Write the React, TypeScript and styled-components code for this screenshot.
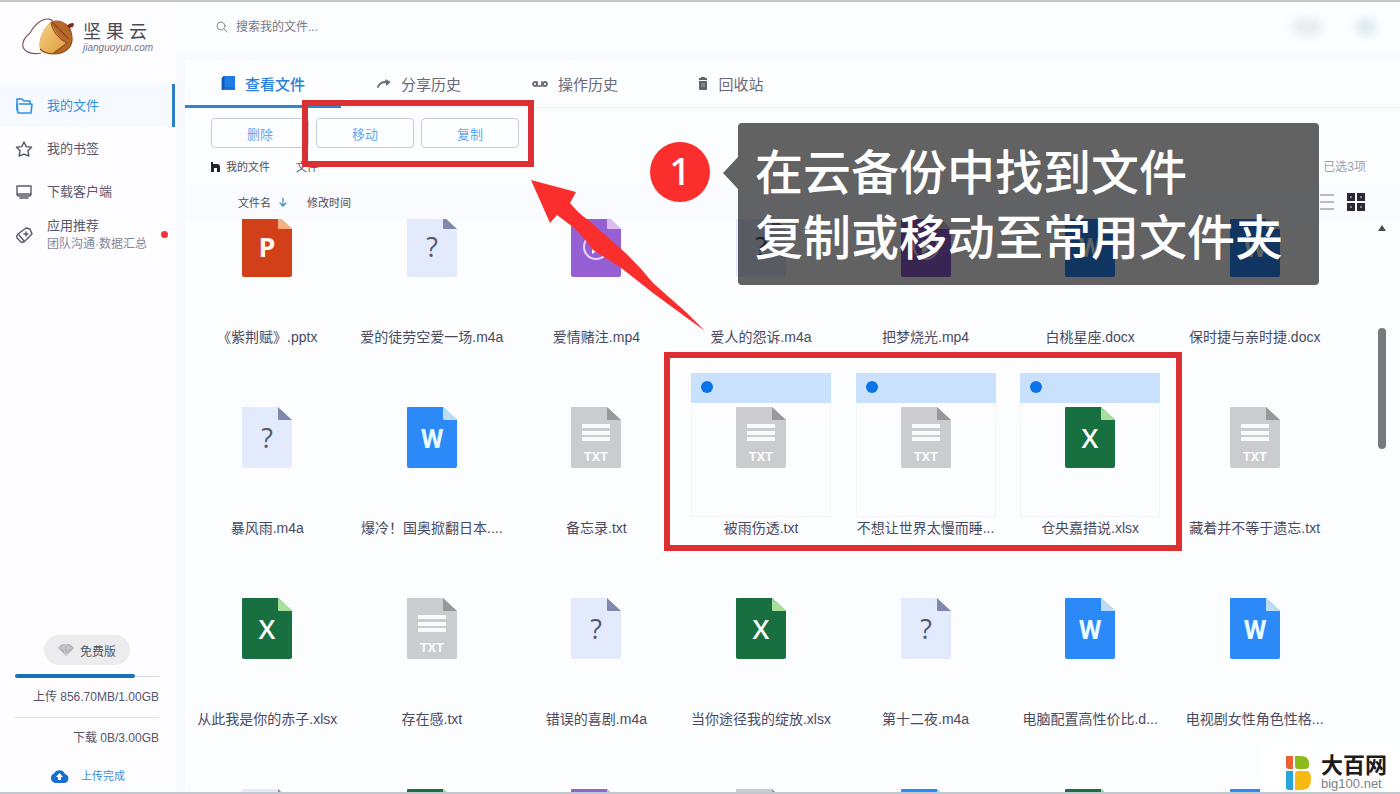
import React from "react";
import styled, { createGlobalStyle, css } from "styled-components";

const GlobalStyle = createGlobalStyle`
  *, *::before, *::after { box-sizing: border-box; }
  body {
    margin: 0;
    background: #fcfdff;
    color: #4c4c60;
    font-family: "Liberation Sans", "Noto Sans CJK SC", sans-serif;
    font-size: 13px;
  }
  a { color: inherit; text-decoration: none; }
  button { font: inherit; color: inherit; cursor: pointer; }
  svg { display: block; flex: none; }
`;

const Shell = styled.div`
  position: relative;
  display: flex;
  height: 100vh;
  overflow: hidden;
  border-top: 2px solid #c6c7ca;
  border-bottom: 2px solid #c3c7ce;
`;

/* ---------- Sidebar ---------- */

const Sidebar = styled.aside`
  flex: none;
  display: flex;
  flex-direction: column;
  width: 176px;
  background: #fdfdff;
`;

const Brand = styled.a`
  display: flex;
  align-items: center;
  gap: 8px;
  height: 82px;
  padding: 0 0 12px 22px;
`;

const BrandText = styled.span`
  display: flex;
  flex-direction: column;
`;

const BrandName = styled.span`
  font-size: 18px;
  line-height: 20px;
  color: #4b4b52;
  white-space: nowrap;
`;

const BrandUrl = styled.span`
  font-size: 10px;
  line-height: 11px;
  font-style: italic;
  color: #77777f;
`;

const Nav = styled.nav`
  display: flex;
  flex-direction: column;
`;

const NavItem = styled.a<{ $active?: boolean }>`
  display: flex;
  align-items: center;
  gap: 14px;
  height: 43px;
  margin-right: 1px;
  padding: 0 4px 0 15px;
  border-right: 3px solid ${(p) => (p.$active ? "#2f80c3" : "transparent")};
  background: ${(p) => (p.$active ? "#f6faff" : "transparent")};
  color: ${(p) => (p.$active ? "#2f8fe6" : "#57576b")};
`;

const NavLabel = styled.span`
  display: flex;
  flex: 1;
  flex-direction: column;
  line-height: 18px;
  white-space: nowrap;
`;

const NavHint = styled.small`
  font-size: 12px;
  line-height: 18px;
  color: #85859a;
`;

const Dot = styled.i`
  flex: none;
  width: 7px;
  height: 7px;
  border-radius: 50%;
  background: #e8383d;
`;

const Quota = styled.section`
  display: flex;
  flex-direction: column;
  margin-top: auto;
  padding: 0 17px 6px 15px;
`;

const PlanButton = styled.button`
  align-self: center;
  display: flex;
  align-items: center;
  justify-content: center;
  gap: 6px;
  width: 86px;
  height: 30px;
  padding: 0;
  border: 0;
  border-radius: 15px;
  background: #ececee;
  color: #55555f;
  font-size: 12px;
`;

const Meter = styled.div`
  height: 4px;
  margin: 9px 0;
  border-radius: 2px;
  background: linear-gradient(#d9dade, #d9dade) center / 100% 1px no-repeat;
`;

const MeterFill = styled.div`
  height: 4px;
  border-radius: 2px;
  background: #1a70b8;
`;

const QuotaLine = styled.p`
  margin: 0;
  font-size: 12px;
  line-height: 20px;
  text-align: right;
  white-space: nowrap;
  color: #55556a;
`;

const QuotaRule = styled.hr`
  width: 100%;
  margin: 10px 0;
  border: 0;
  border-top: 1px solid #e4e5ea;
`;

const UploadLink = styled.a`
  display: flex;
  align-items: center;
  gap: 12px;
  margin-top: 18px;
  padding-left: 35px;
  font-size: 11px;
  line-height: 20px;
  color: #3f8fd8;
`;

/* ---------- Main area ---------- */

const Main = styled.main`
  flex: 1;
  display: flex;
  flex-direction: column;
  min-width: 0;
  background: #f8f9fc;
`;

const TopBar = styled.header`
  flex: none;
  display: flex;
  align-items: center;
  justify-content: space-between;
  height: 50px;
  padding: 0 24px 0 40px;
  background: #fcfdff;
`;

const Search = styled.label`
  display: flex;
  align-items: center;
  gap: 8px;
  color: #8a8a94;
`;

const SearchInput = styled.input`
  width: 200px;
  padding: 0;
  border: 0;
  outline: 0;
  background: transparent;
  font: inherit;
  font-size: 12px;
  &::placeholder { color: #777782; opacity: 1; }
`;

const Account = styled.div`
  display: flex;
  gap: 34px;
`;

const Smudge = styled.span<{ $w: number; $tone: string }>`
  width: ${(p) => p.$w}px;
  height: 16px;
  border-radius: 8px;
  background: ${(p) => p.$tone};
  filter: blur(4px);
`;

const Panel = styled.section`
  flex: 1;
  display: flex;
  flex-direction: column;
  min-height: 0;
  margin: 8px 0 0 9px;
  background: #fcfdff;
`;

const Tabs = styled.div`
  flex: none;
  display: flex;
  height: 48px;
  border-bottom: 1px solid #edf0f4;
`;

const Tab = styled.button<{ $active?: boolean }>`
  display: flex;
  align-items: center;
  justify-content: center;
  gap: 10px;
  width: 156px;
  height: 48px;
  padding: 2px 0 0;
  border: 0;
  border-bottom: 3px solid ${(p) => (p.$active ? "#2f86cc" : "transparent")};
  background: none;
  font-size: 15px;
  font-weight: ${(p) => (p.$active ? 500 : 400)};
  color: ${(p) => (p.$active ? "#2a80dc" : "#6a6a78")};
`;

const Actions = styled.div`
  flex: none;
  display: flex;
  gap: 7px;
  padding: 10px 26px 9px;
`;

const ActionButton = styled.button`
  width: 98px;
  height: 30px;
  padding: 0;
  border: 1px solid #c3cbdd;
  border-radius: 4px;
  background: #fdfeff;
  color: #62a8ec;
`;

const PathRow = styled.div`
  flex: none;
  display: flex;
  justify-content: space-between;
  padding: 0 34px 0 26px;
  height: 20px;
  font-size: 11px;
  line-height: 20px;
`;

const Crumbs = styled.nav`
  display: flex;
  align-items: center;
  gap: 6px;
`;

const Crumb = styled.a`
  margin-right: 20px;
`;

const Picked = styled.span`
  font-size: 12px;
  color: #a0a0ac;
`;

const SortRow = styled.div`
  flex: none;
  display: flex;
  align-items: center;
  gap: 20px;
  height: 34px;
  margin-top: 8px;
  padding: 0 34px 0 53px;
  background: #fafbfe;
  font-size: 11px;
`;

const SortButton = styled.button`
  display: flex;
  align-items: center;
  gap: 8px;
  padding: 0;
  border: 0;
  background: none;
`;

const ViewSwitch = styled.div`
  display: flex;
  gap: 12px;
  margin-left: auto;
`;

const Browser = styled.div`
  flex: 1;
  display: flex;
  min-height: 0;
  overflow: hidden;
`;

/* The list is scrolled down by the first row's selection strip. */
const FileGrid = styled.ul`
  flex: 1;
  display: grid;
  grid-template-columns: repeat(7, 1fr);
  grid-auto-rows: 191px;
  min-width: 0;
  margin: -37px 0 0;
  padding: 0 27px 0 0;
  list-style: none;
`;

const FileCell = styled.li`
  display: flex;
  flex-direction: column;
  align-items: center;
  min-width: 0;
`;

const FileCard = styled.label<{ $picked?: boolean }>`
  display: flex;
  flex-direction: column;
  align-items: center;
  gap: 4px;
  width: 140px;
  height: 144px;
  ${(p) =>
    p.$picked &&
    css`
      box-shadow: inset 0 0 0 1px #f3f5fa;
    `}
`;

const PickStrip = styled.span<{ $picked?: boolean }>`
  display: flex;
  align-items: center;
  width: 100%;
  height: 30px;
  padding: 0 10px 2px;
  background: ${(p) => (p.$picked ? "#c9e1fd" : "transparent")};
`;

const PickBox = styled.input`
  appearance: none;
  width: 12px;
  height: 12px;
  margin: 0;
  border-radius: 50%;
  &:checked { background: #0b74e8; }
`;

const FileName = styled.span`
  font-size: 14px;
  line-height: 22px;
  white-space: nowrap;
  color: #4a4a5e;
`;

const Scroller = styled.div`
  flex: none;
  display: flex;
  flex-direction: column;
  align-items: center;
  gap: 96px;
  width: 36px;
  padding-top: 6px;
`;

const Thumb = styled.div`
  width: 8px;
  height: 121px;
  border-radius: 4px;
  background: #77797d;
`;

/* ---------- Tutorial marks laid over the page ---------- */

const Frame = styled.div<{ $x: number; $y: number; $w: number; $h: number }>`
  position: absolute;
  left: ${(p) => p.$x}px;
  top: ${(p) => p.$y}px;
  width: ${(p) => p.$w}px;
  height: ${(p) => p.$h}px;
  border: 6px solid #dc2f34;
  pointer-events: none;
`;

const Arrow = styled.svg`
  position: absolute;
  left: 526px;
  top: 174px;
  pointer-events: none;
`;

const StepBadge = styled.div`
  position: absolute;
  left: 650px;
  top: 140px;
  display: flex;
  align-items: center;
  justify-content: center;
  width: 60px;
  height: 60px;
  padding-bottom: 4px;
  border-radius: 50%;
  background: #fb2e2e;
  color: #fff;
  font: 500 38px/56px "Noto Sans", sans-serif;
`;

const Callout = styled.div`
  position: absolute;
  left: 738px;
  top: 121px;
  width: 581px;
  height: 162px;
  padding: 18px 17px;
  border-radius: 4px;
  background: rgba(0, 0, 0, 0.61);
  color: #fff;
  font-size: 48px;
  font-weight: 500;
  line-height: 65px;
  white-space: nowrap;
  &::before {
    content: "";
    position: absolute;
    right: 100%;
    top: 34px;
    border: solid transparent;
    border-width: 16px 15px 16px 0;
    border-right-color: rgba(0, 0, 0, 0.61);
  }
`;

const SiteMark = styled.a`
  position: absolute;
  right: 0;
  bottom: -2px;
  display: flex;
  align-items: center;
  gap: 10px;
  width: 140px;
  height: 49px;
  padding: 6px 0 0 26px;
  background: #fff;
`;

const SiteText = styled.span`
  display: flex;
  flex-direction: column;
`;

const SiteName = styled.strong`
  font-size: 22px;
  line-height: 23px;
  font-weight: 700;
  color: #1c1c1c;
`;

const SiteUrl = styled.span`
  font-size: 13px;
  line-height: 14px;
  color: #808080;
`;

/* ---------- Icons ---------- */

const line = {
  fill: "none",
  stroke: "currentColor",
  strokeWidth: 1.4,
  strokeLinecap: "round" as const,
  strokeLinejoin: "round" as const,
};

const AcornLogo = () => (
  <svg width="53" height="38" viewBox="0 0 53 38">
    <defs>
      <linearGradient id="nut" x1="0" y1="0" x2="1" y2="1">
        <stop offset="0" stopColor="#f7d283" />
        <stop offset="1" stopColor="#dd9a3c" />
      </linearGradient>
    </defs>
    <path d="M19 35C10 37 3 34 1 29c-1-5 2-10 7-14C12 7 19 1 26 1c3 0 4 1 5 3" fill="#fff" stroke="#85505a" strokeWidth="1.1" />
    <path d="M29 4C22 10 16 20 18 31c1 4 9 5 14 5 9 0 17-5 18-13 1-9-6-16-21-19z" fill="#b5682a" />
    <path d="M29 4C22 10 16 20 18 31c2 3 8 5 13 4l14-10C38 20 32 13 29 4z" fill="url(#nut)" />
    <path d="M29 4c5-3 13-1 18 4 3 4 3 9 1 15l-3 2C39 20 32 13 29 4z" fill="#b8672a" />
    <path d="M30 4l17 17" stroke="#8c4a1c" strokeWidth="1.2" />
    <path d="M29 4c1 9 8 17 16 21L32 35M18 31c3 3 9 5 14 5 9 0 17-5 18-13 1-5-1-9-3-14" fill="none" stroke="#93501e" strokeWidth="1.1" />
    <path d="M45 8q2-3 6-3l1 1-1 3-4 1z" fill="#7b2a1c" />
  </svg>
);

const FolderIcon = () => (
  <svg width="18" height="18" viewBox="0 0 18 18" {...line} strokeWidth={1.6}>
    <path d="M2 6V2h5l2 2h6v3M2 4v9" />
    <path d="M4 7h13l-1 9H3L2 8" />
  </svg>
);

const StarIcon = () => (
  <svg width="18" height="18" viewBox="0 0 18 18" {...line}>
    <path d="M9 2l2.200 4.600 5.300.6-3.600 3.600 1 5.200L9 14.200 4.100 16l1-5.200L1.500 7.200l5.300-.6z" />
  </svg>
);

const MonitorIcon = () => (
  <svg width="18" height="18" viewBox="0 0 18 18" {...line}>
    <path d="M2 3h14v8q0 2-2 2H4q-2 0-2-2zM3 11h12M5 15h8" />
  </svg>
);

const TagIcon = () => (
  <svg width="18" height="18" viewBox="0 0 18 18" {...line}>
    <path d="M11 2l4 1 2 5-7 7q-2 2-4 1l-4-4q-1-2 1-4z" />
    <path d="M11 6v4M9 8h4M4 9l5 6" />
  </svg>
);

const GemIcon = () => (
  <svg width="16" height="14" viewBox="0 0 16 14">
    <path d="M4 1h8l4 4-8 8-8-8z" fill="#b3b3b6" />
    <path d="M0 5h16M4 1l1.500 4L8 13l2.500-8L12 1M5.500 5L8 1l2.500 4" fill="none" stroke="#d4d4d6" strokeWidth=".8" />
  </svg>
);

const CloudIcon = () => (
  <svg width="19" height="14" viewBox="0 0 19 14">
    <path d="M5 14a5 5 0 01-1-9.500 6 6 0 0111 .5A4.600 4.600 0 0114.500 14z" fill="#176fce" />
    <path d="M9.500 4L6 8h2v3h3V8h2z" fill="#fff" />
  </svg>
);

const SearchIcon = () => (
  <svg width="12" height="12" viewBox="0 0 12 12" {...line} strokeWidth={1}>
    <circle cx="5" cy="5" r="4" />
    <path d="M8 8l3 3" />
  </svg>
);

const BookIcon = () => (
  <svg width="14" height="15" viewBox="0 0 14 15">
    <path d="M3 0h11v14H1V2z" fill="#1f7be6" />
    <path d="M3 0v12L1 14V2zM3 12h11" fill="#0f5bb8" stroke="#0f5bb8" strokeWidth=".8" />
  </svg>
);

const ShareIcon = () => (
  <svg width="14" height="12" viewBox="0 0 14 12" {...line} strokeWidth={1.8}>
    <path d="M1 9c1-3 4-5 8-5" />
    <path d="M9 2l4 2-3 3z" fill="currentColor" strokeWidth="1" />
  </svg>
);

const HistoryIcon = () => (
  <svg width="16" height="8" viewBox="0 0 16 8" {...line} strokeWidth={1.8}>
    <circle cx="3" cy="4" r="2" />
    <circle cx="13" cy="4" r="2" />
    <path d="M5 2v4M10 2v4M7 6h1" />
  </svg>
);

const TrashIcon = () => (
  <svg width="10" height="13" viewBox="0 0 10 13">
    <path d="M3 0h4v1h2v2H1V1h2zM1 4h8v8q0 1-1 1H2q-1 0-1-1z" fill="#62626c" />
    <path d="M4 6v4M6 6v4" stroke="#a4a4ac" />
  </svg>
);

const HomeIcon = () => (
  <svg width="9" height="10" viewBox="0 0 9 10">
    <path d="M0 0h2v2h4q3 0 3 3v5H6V6H3v4H0z" fill="#23232e" />
  </svg>
);

const DownIcon = () => (
  <svg width="8" height="10" viewBox="0 0 8 10" {...line} stroke="#3f8fb8" strokeWidth={1.2}>
    <path d="M4 1v8M1 6l3 3 3-3" />
  </svg>
);

const ListIcon = () => (
  <svg width="14" height="20" viewBox="0 0 14 20">
    <path d="M0 3h14M0 10h14M0 17h14" stroke="#a5a5ae" strokeWidth="1.500" />
  </svg>
);

const TilesIcon = () => (
  <svg width="20" height="20" viewBox="0 0 20 20">
    <path d="M1 1h8v8H1zM11 1h8v8h-8zM1 11h8v8H1zM11 11h8v8h-8z" fill="#292937" />
    <path d="M4 5h2M14 5h2M4 15h2M14 15h2" stroke="#85858f" strokeWidth="2" />
  </svg>
);

const UpIcon = () => (
  <svg width="8" height="7" viewBox="0 0 8 7">
    <path d="M4 0l4 6H0z" fill="#4a4a52" />
  </svg>
);

const SiteLogo = () => (
  <svg width="25" height="34" viewBox="0 0 25 34">
    <path d="M0 0h7v13H3q-3 0-3-3z" fill="#ea6134" />
    <path d="M9 0h6q8 0 8 8v3q-1 2-4 2H12q-3 0-3-3z" fill="#8bbb1c" />
    <path d="M0 15h7v19H3q-3 0-3-3z" fill="#29a3dc" />
    <path d="M9 18q0-3 3-3h10q3 2 3 8 0 11-10 11H9z" fill="#f8b914" />
  </svg>
);

type Kind = "ppt" | "unknown" | "video" | "word" | "txt" | "excel";

const looks: Record<Kind, { body: string; fold: string; letter?: string; ink?: string }> = {
  ppt: { body: "#d2401a", fold: "#f8b184", letter: "P", ink: "#fff6ee" },
  unknown: { body: "#e2eafc", fold: "#7f89ad", letter: "?", ink: "#55596a" },
  video: { body: "#9460d4", fold: "#dcbcf0" },
  word: { body: "#2b8af8", fold: "#bcdcf8", letter: "W", ink: "#e8fbff" },
  txt: { body: "#cbcccf", fold: "#97989c" },
  excel: { body: "#187040", fold: "#a8e09c", letter: "X", ink: "#ffffff" },
};

const FileMark = ({ kind }: { kind: Kind }) => {
  const { letter, ink } = looks[kind];
  if (kind === "txt") {
    return (
      <>
        <path d="M11 19h28M11 26h28M11 32h28" stroke="#fafafa" strokeWidth="4" />
        <text x="25" y="54" textAnchor="middle" fontFamily="Roboto, sans-serif" fontSize="13" fontWeight="700" fill="#fafafa">
          TXT
        </text>
      </>
    );
  }
  if (kind === "video") {
    return (
      <>
        <circle cx="25" cy="31" r="12" fill="none" stroke="#ecd4ff" strokeWidth="2" />
        <path d="M21 24l11 7-11 7z" fill="#fff" />
      </>
    );
  }
  return (
    <text
      x="25"
      y="41"
      textAnchor="middle"
      fontFamily={kind === "word" ? "Roboto, sans-serif" : '"Open Sans", sans-serif'}
      fontSize={kind === "word" ? 26 : 27}
      fontWeight={kind === "unknown" ? 400 : kind === "excel" ? 600 : 700}
      fill={ink}
    >
      {letter}
    </text>
  );
};

const FileIcon = ({ kind, blank }: { kind: Kind; blank?: boolean }) => (
  <svg width="50" height="61" viewBox="0 0 50 61">
    <path d="M1 0h35l14 13v46q0 2-2 2H2q-2 0-2-2V1q0-1 1-1z" fill={looks[kind].body} />
    <path d="M36 0l14 13H37q-1 0-1-1z" fill={looks[kind].fold} />
    {!blank && <FileMark kind={kind} />}
  </svg>
);

/* ---------- Data ---------- */

type FileItem = { kind: Kind; name?: string; picked?: boolean };

const files: FileItem[] = [
  { kind: "ppt", name: "《紫荆赋》.pptx" },
  { kind: "unknown", name: "爱的徒劳空爱一场.m4a" },
  { kind: "video", name: "爱情赌注.mp4" },
  { kind: "unknown", name: "爱人的怨诉.m4a" },
  { kind: "video", name: "把梦烧光.mp4" },
  { kind: "word", name: "白桃星座.docx" },
  { kind: "word", name: "保时捷与亲时捷.docx" },
  { kind: "unknown", name: "暴风雨.m4a" },
  { kind: "word", name: "爆冷！国奥掀翻日本...." },
  { kind: "txt", name: "备忘录.txt" },
  { kind: "txt", name: "被雨伤透.txt", picked: true },
  { kind: "txt", name: "不想让世界太慢而睡...", picked: true },
  { kind: "excel", name: "仓央嘉措说.xlsx", picked: true },
  { kind: "txt", name: "藏着并不等于遗忘.txt" },
  { kind: "excel", name: "从此我是你的赤子.xlsx" },
  { kind: "txt", name: "存在感.txt" },
  { kind: "unknown", name: "错误的喜剧.m4a" },
  { kind: "excel", name: "当你途径我的绽放.xlsx" },
  { kind: "unknown", name: "第十二夜.m4a" },
  { kind: "word", name: "电脑配置高性价比.d..." },
  { kind: "word", name: "电视剧女性角色性格..." },
  { kind: "unknown" },
  { kind: "excel" },
  { kind: "video" },
  { kind: "txt" },
  { kind: "word" },
  { kind: "excel" },
  { kind: "word" },
];

const tabs = [
  { label: "查看文件", icon: <BookIcon />, active: true },
  { label: "分享历史", icon: <ShareIcon /> },
  { label: "操作历史", icon: <HistoryIcon /> },
  { label: "回收站", icon: <TrashIcon /> },
];

const usedShare = 83;

export default function App() {
  return (
    <Shell>
      <GlobalStyle />
      <Sidebar>
        <Brand href="#home">
          <AcornLogo />
          <BrandText>
            <BrandName>坚 果 云</BrandName>
            <BrandUrl>jianguoyun.com</BrandUrl>
          </BrandText>
        </Brand>
        <Nav>
          <NavItem href="#files" $active>
            <FolderIcon />
            <NavLabel>我的文件</NavLabel>
          </NavItem>
          <NavItem href="#bookmarks">
            <StarIcon />
            <NavLabel>我的书签</NavLabel>
          </NavItem>
          <NavItem href="#clients">
            <MonitorIcon />
            <NavLabel>下载客户端</NavLabel>
          </NavItem>
          <NavItem href="#apps">
            <TagIcon />
            <NavLabel>
              应用推荐
              <NavHint>团队沟通·数据汇总</NavHint>
            </NavLabel>
            <Dot />
          </NavItem>
        </Nav>
        <Quota>
          <PlanButton type="button">
            <GemIcon />
            免费版
          </PlanButton>
          <Meter>
            <MeterFill style={{ width: `${usedShare}%` }} />
          </Meter>
          <QuotaLine>上传 856.70MB/1.00GB</QuotaLine>
          <QuotaRule />
          <QuotaLine>下载 0B/3.00GB</QuotaLine>
          <UploadLink href="#uploads">
            <CloudIcon />
            上传完成
          </UploadLink>
        </Quota>
      </Sidebar>

      <Main>
        <TopBar>
          <Search>
            <SearchIcon />
            <SearchInput type="search" placeholder="搜索我的文件..." />
          </Search>
          <Account>
            <Smudge $w={30} $tone="#e8eaee" />
            <Smudge $w={20} $tone="#dbe9ec" />
          </Account>
        </TopBar>
        <Panel>
          <Tabs>
            {tabs.map((t) => (
              <Tab key={t.label} type="button" $active={t.active}>
                {t.icon}
                {t.label}
              </Tab>
            ))}
          </Tabs>
          <Actions>
            <ActionButton type="button">删除</ActionButton>
            <ActionButton type="button">移动</ActionButton>
            <ActionButton type="button">复制</ActionButton>
          </Actions>
          <PathRow>
            <Crumbs>
              <HomeIcon />
              <Crumb href="#root">我的文件</Crumb>
              <Crumb href="#folder">文件</Crumb>
            </Crumbs>
            <Picked>已选3项</Picked>
          </PathRow>
          <SortRow>
            <SortButton type="button">
              文件名
              <DownIcon />
            </SortButton>
            <SortButton type="button">修改时间</SortButton>
            <ViewSwitch>
              <SortButton type="button" aria-label="列表">
                <ListIcon />
              </SortButton>
              <SortButton type="button" aria-label="图标">
                <TilesIcon />
              </SortButton>
            </ViewSwitch>
          </SortRow>
          <Browser>
            <FileGrid>
              {files.map((f, i) => (
                <FileCell key={i}>
                  <FileCard $picked={f.picked}>
                    <PickStrip $picked={f.picked}>
                      <PickBox type="checkbox" aria-label={f.name} defaultChecked={f.picked} />
                    </PickStrip>
                    <FileIcon kind={f.kind} blank={!f.name} />
                  </FileCard>
                  {f.name && <FileName>{f.name}</FileName>}
                </FileCell>
              ))}
            </FileGrid>
            <Scroller>
              <UpIcon />
              <Thumb />
            </Scroller>
          </Browser>
        </Panel>
      </Main>

      <Frame $x={302} $y={98} $w={232} $h={67} />
      <Frame $x={664} $y={350} $w={518} $h={199} />
      <Arrow width="182" height="162" viewBox="0 0 182 162">
        <path
          d="M5 4L50 16 44 27Q52 37 62 44L94 72Q112 88 127 107L161 137 179 155 161 142 127 117 94 91 67 74Q56 59 47 51L31 39 24 47z"
          fill="#fb2e2e"
        />
      </Arrow>
      <StepBadge>1</StepBadge>
      <Callout>
        在云备份中找到文件
        <br />
        复制或移动至常用文件夹
      </Callout>
      <SiteMark href="#site">
        <SiteLogo />
        <SiteText>
          <SiteName>大百网</SiteName>
          <SiteUrl>big100.net</SiteUrl>
        </SiteText>
      </SiteMark>
    </Shell>
  );
}
